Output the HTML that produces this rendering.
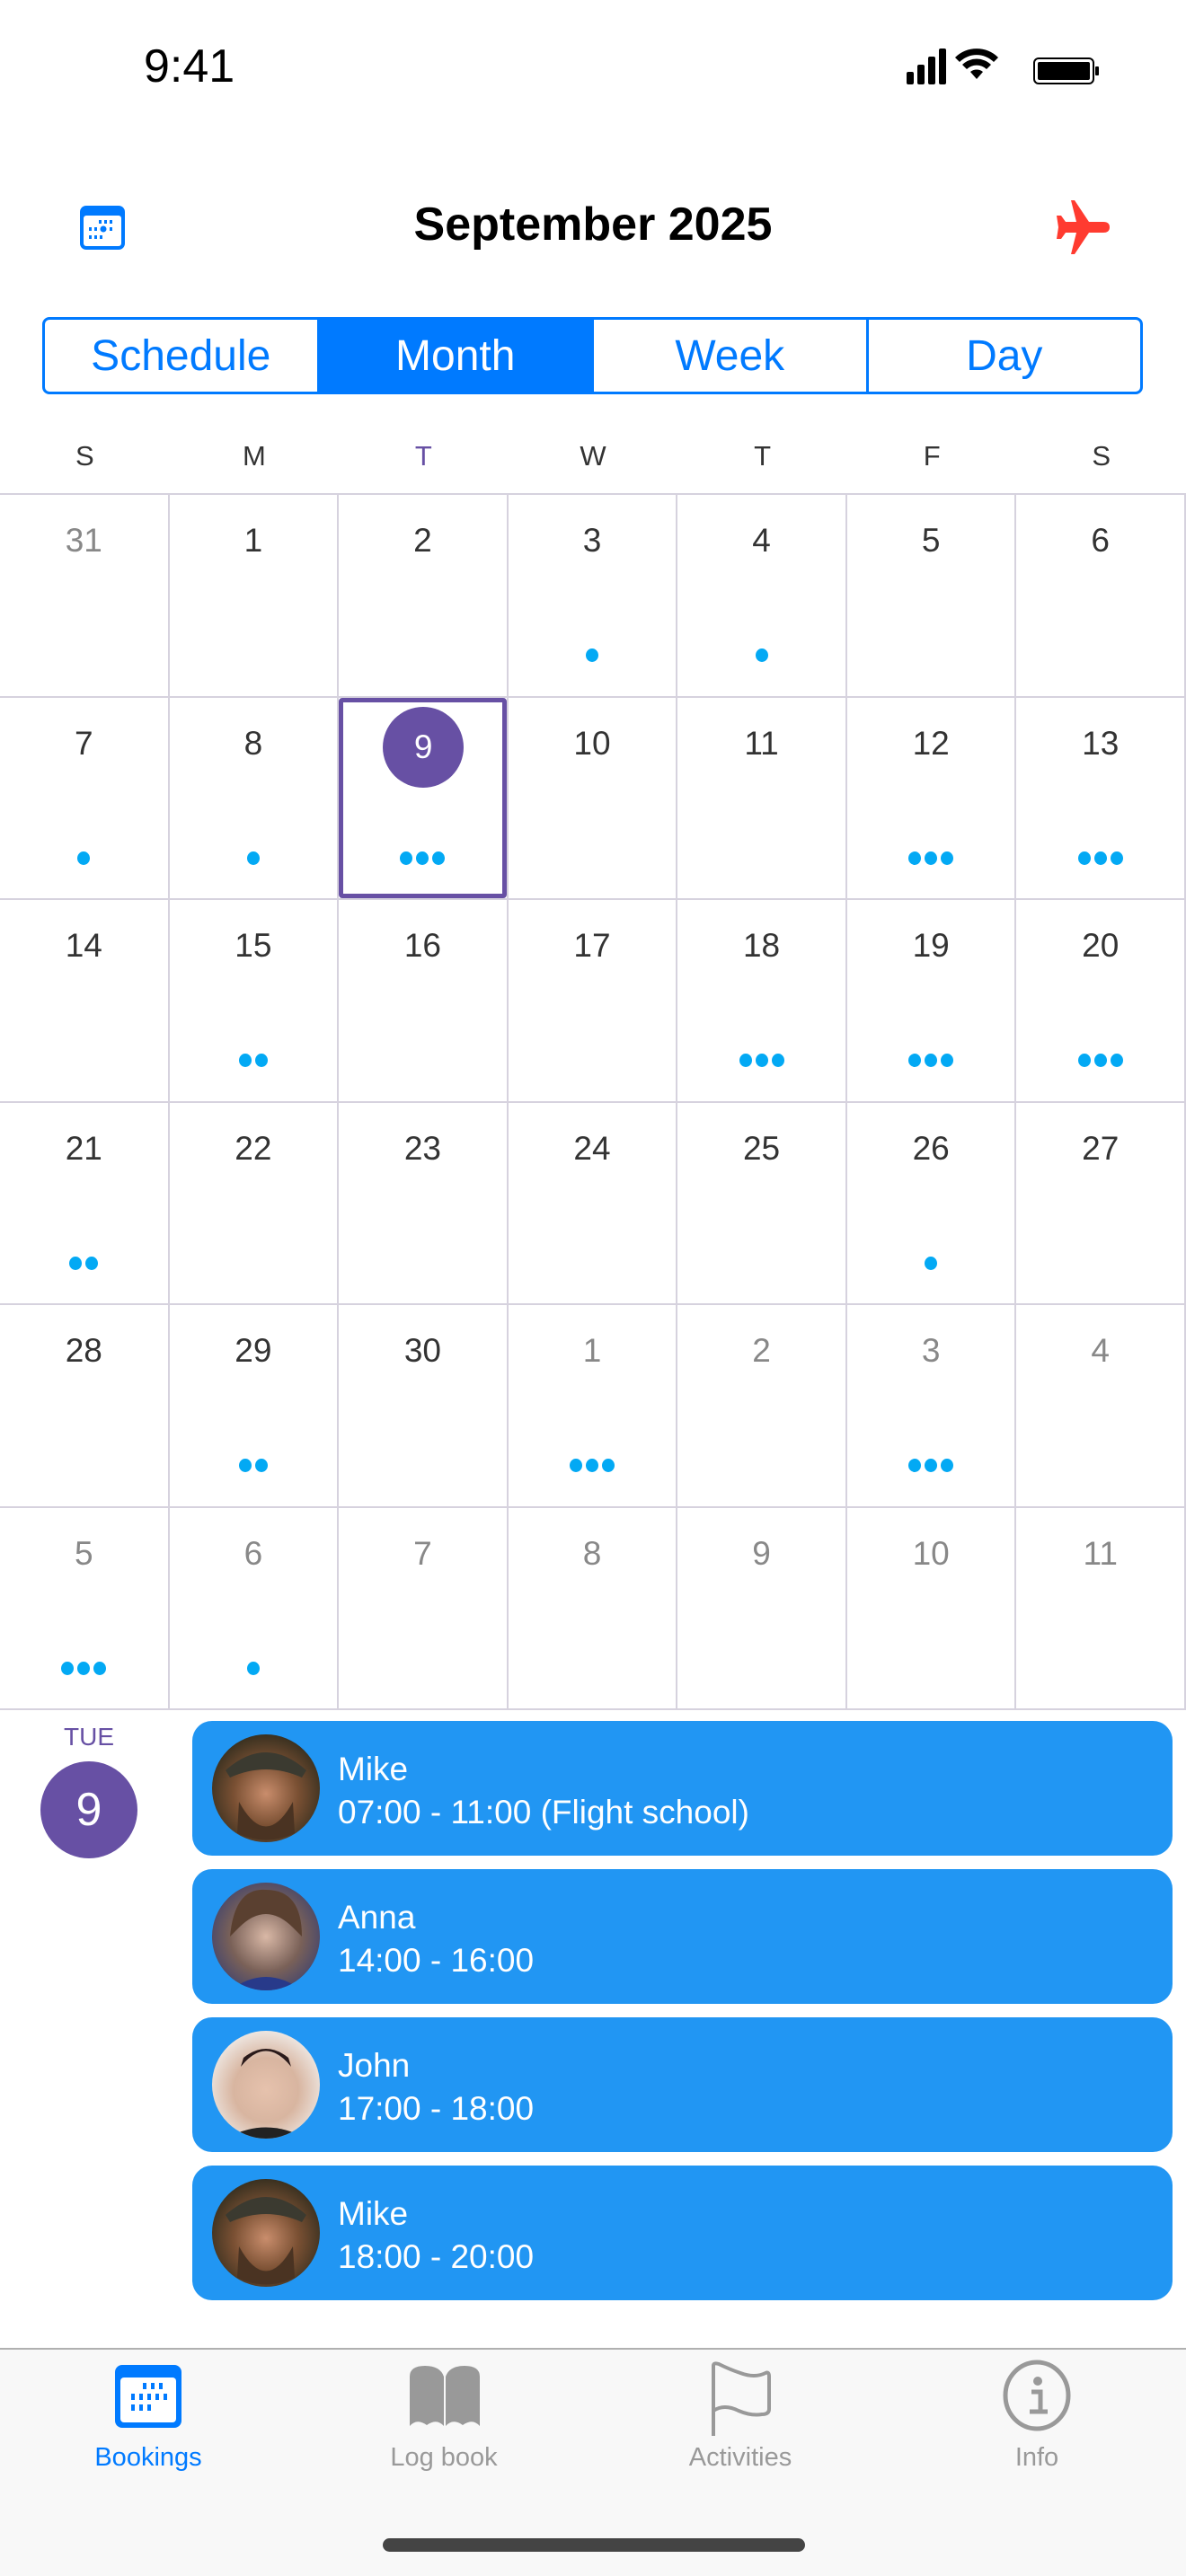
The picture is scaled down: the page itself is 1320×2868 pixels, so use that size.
<!DOCTYPE html>
<html><head><meta charset="utf-8"><style>
*{margin:0;padding:0;box-sizing:border-box}
body{width:1320px;height:2868px;background:#fff;font-family:"Liberation Sans",sans-serif;position:relative;overflow:hidden;color:#222}
.abs{position:absolute}
.seg{position:absolute;left:47px;top:353px;width:1225px;height:86px;border:3px solid #007aff;border-radius:8px;display:flex;overflow:hidden}
.seg div{flex:1;display:flex;align-items:center;justify-content:center;font-size:48px;color:#007aff;border-right:3px solid #007aff}
.seg div:last-child{border-right:none}
.seg .on{background:#007aff;color:#fff}
.wd{position:absolute;top:490px;width:188.6px;text-align:center;font-size:31px;color:#333}
.grid{position:absolute;left:0;top:549px;width:1320px;height:1352px;border-top:2px solid #d6d2de}
.cell{position:absolute;width:188.6px;height:225.5px;border-right:2px solid #d6d2de;border-bottom:2px solid #d6d2de}
.num{position:absolute;top:30px;width:100%;text-align:center;font-size:37px;color:#333}
.gray .num{color:#888}
.dots{position:absolute;top:171px;width:100%;display:flex;justify-content:center;gap:4px}
.dots i{width:14px;height:15px;border-radius:50%;background:#03a9f4;display:block}
.card{position:absolute;left:214px;width:1091px;height:150px;background:#2196f3;border-radius:22px;color:#fff}
.card .av{position:absolute;left:22px;top:15px;width:120px;height:120px;border-radius:50%;overflow:hidden}
.card .t{position:absolute;left:162px;top:30px;font-size:37px;line-height:48px}
.tab{position:absolute;top:2720px;width:330px;text-align:center;font-size:29px;color:#999}
</style></head><body>
<div class="abs" style="left:160px;top:44px;font-size:52px;color:#000">9:41</div>
<svg class="abs" style="left:1005px;top:52px" width="220" height="44" viewBox="0 0 220 44">
<rect x="4" y="28" width="8" height="14" rx="2"/><rect x="16" y="20" width="8" height="22" rx="2"/><rect x="28" y="11" width="8" height="31" rx="2"/><rect x="40" y="2" width="8" height="40" rx="2"/>
<path d="M82 36 l-7-8 a11 11 0 0 1 14 0z M66 20 a23 23 0 0 1 32 0 l-5 5 a16 16 0 0 0 -22 0z M58 12 a34 34 0 0 1 48 0 l-5 5 a27 27 0 0 0 -38 0z"/>
<rect x="146" y="13" width="66" height="28" rx="5" fill="none" stroke="#000" stroke-width="2"/><rect x="150" y="17" width="58" height="20" rx="2"/><rect x="214" y="22" width="4" height="10" rx="1"/>
</svg>
<svg class="abs" style="left:88px;top:228px" width="52" height="51" viewBox="0 0 52 51"><rect x="1" y="1" width="50" height="49" rx="7" fill="#007aff"/><rect x="5" y="12" width="42" height="34" rx="3" fill="#fff"/>
<g fill="#007aff"><rect x="22" y="17" width="3" height="4"/><rect x="28" y="17" width="3" height="4"/><rect x="34" y="17" width="3" height="4"/><rect x="11" y="25" width="3" height="4"/><rect x="17" y="25" width="3" height="4"/><circle cx="27" cy="27" r="3.5"/><rect x="34" y="25" width="3" height="4"/><rect x="11" y="34" width="3" height="4"/><rect x="17" y="34" width="3" height="4"/><rect x="23" y="34" width="3" height="4"/></g></svg>
<div class="abs" style="left:0;width:1320px;top:220px;text-align:center;font-size:52px;font-weight:bold;color:#000">September 2025</div>
<svg class="abs" style="left:1174px;top:222px" width="62" height="62" viewBox="0 0 62 62"><path fill="#ff3b30" d="M18 1 L22 1 L38 25 L54 25 Q61 25 61 31 Q61 37 54 37 L38 37 L22 61 L18 61 L24 37 L12 37 L7 44 L2 44 L4 31 L2 18 L7 18 L12 25 L24 25 Z"/></svg>
<div class="seg"><div>Schedule</div><div class="on">Month</div><div>Week</div><div>Day</div></div>
<div class="wd" style="left:0">S</div><div class="wd" style="left:188.6px">M</div><div class="wd" style="left:377.1px;color:#6750a4">T</div><div class="wd" style="left:565.7px">W</div><div class="wd" style="left:754.3px">T</div><div class="wd" style="left:942.9px">F</div><div class="wd" style="left:1131.4px">S</div>
<div class="grid" id="g"></div>
<script>
var d=[["31",0,1],["1",0],["2",0],["3",1],["4",1],["5",0],["6",0],
["7",1],["8",1],["9",3],["10",0],["11",0],["12",3],["13",3],
["14",0],["15",2],["16",0],["17",0],["18",3],["19",3],["20",3],
["21",2],["22",0],["23",0],["24",0],["25",0],["26",1],["27",0],
["28",0],["29",2],["30",0],["1",3,1],["2",0,1],["3",3,1],["4",0,1],
["5",3,1],["6",1,1],["7",0,1],["8",0,1],["9",0,1],["10",0,1],["11",0,1]];
var h="";d.forEach(function(c,i){var r=Math.floor(i/7),k=i%7;var dots="";for(var j=0;j<c[1];j++)dots+="<i></i>";
var num=(i==9)?'<div style="position:absolute;left:49px;top:10px;width:90px;height:90px;border-radius:50%;background:#6750a4;color:#fff;font-size:37px;display:flex;align-items:center;justify-content:center">9</div>':'<div class="num">'+c[0]+'</div>';
var sel=(i==9)?'<div style="position:absolute;left:0;top:0;right:0;bottom:0;border:5px solid #6750a4;border-radius:4px"></div>':'';
h+='<div class="cell'+(c[2]?' gray':'')+'" style="left:'+(k*188.57)+'px;top:'+(r*225.5)+'px">'+sel+num+'<div class="dots">'+dots+'</div></div>';});
document.getElementById("g").innerHTML=h;
</script>
<div class="abs" style="left:49px;width:100px;top:1918px;text-align:center;font-size:28px;color:#6750a4">TUE</div>
<div class="abs" style="left:45px;top:1961px;width:108px;height:108px;border-radius:50%;background:#6750a4;color:#fff;font-size:52px;display:flex;align-items:center;justify-content:center">9</div>
<svg width="0" height="0" style="position:absolute"><defs>
<radialGradient id="m" cx=".5" cy=".55" r=".6"><stop offset="0" stop-color="#c98d6c"/><stop offset=".5" stop-color="#7a5033"/><stop offset="1" stop-color="#2c2a1c"/></radialGradient>
<radialGradient id="a" cx=".5" cy=".5" r=".6"><stop offset="0" stop-color="#d9b8a6"/><stop offset=".55" stop-color="#7a6158"/><stop offset="1" stop-color="#3a4070"/></radialGradient>
<radialGradient id="j" cx=".5" cy=".55" r=".6"><stop offset="0" stop-color="#e6c2ad"/><stop offset=".5" stop-color="#d8b5a0"/><stop offset="1" stop-color="#f2f0ee"/></radialGradient></defs></svg>
<div class="card" style="top:1916px"><svg class="av" viewBox="0 0 120 120"><rect width="120" height="120" fill="url(#m)"/><path d="M15 40 Q60 0 105 40 L100 48 Q60 30 20 48Z" fill="#3b3a30"/><path d="M30 75 Q60 130 90 75 L92 110 Q60 125 28 110Z" fill="#4a3322"/></svg><div class="t">Mike<br>07:00 - 11:00 (Flight school)</div></div>
<div class="card" style="top:2081px"><svg class="av" viewBox="0 0 120 120"><rect width="120" height="120" fill="url(#a)"/><path d="M20 60 Q25 5 60 8 Q100 8 100 60 L90 50 Q60 20 30 50Z" fill="#5a4030"/><path d="M20 120 Q60 90 100 120Z" fill="#283a8a"/></svg><div class="t">Anna<br>14:00 - 16:00</div></div>
<div class="card" style="top:2246px"><svg class="av" viewBox="0 0 120 120"><rect width="120" height="120" fill="url(#j)"/><path d="M32 40 Q60 5 88 40 L85 30 Q60 10 35 30Z" fill="#2a1a1a"/><path d="M15 120 Q60 95 105 120Z" fill="#222"/></svg><div class="t">John<br>17:00 - 18:00</div></div>
<div class="card" style="top:2411px"><svg class="av" viewBox="0 0 120 120"><rect width="120" height="120" fill="url(#m)"/><path d="M15 40 Q60 0 105 40 L100 48 Q60 30 20 48Z" fill="#3b3a30"/><path d="M30 75 Q60 130 90 75 L92 110 Q60 125 28 110Z" fill="#4a3322"/></svg><div class="t">Mike<br>18:00 - 20:00</div></div>
<div class="abs" style="left:0;top:2614px;width:1320px;height:254px;background:#f8f8f8;border-top:2px solid #b0b0b0"></div>
<svg class="abs" style="left:128px;top:2633px" width="74" height="70" viewBox="0 0 74 70"><rect x="0" y="0" width="74" height="70" rx="8" fill="#007aff"/><rect x="6" y="14" width="62" height="50" rx="4" fill="#fff"/><g fill="#007aff"><rect x="31" y="20" width="4" height="7"/><rect x="40" y="20" width="4" height="7"/><rect x="49" y="20" width="4" height="7"/><rect x="18" y="32" width="4" height="7"/><rect x="27" y="32" width="4" height="7"/><rect x="36" y="32" width="4" height="7"/><rect x="45" y="32" width="4" height="7"/><rect x="54" y="32" width="4" height="7"/><rect x="18" y="44" width="4" height="7"/><rect x="27" y="44" width="4" height="7"/><rect x="36" y="44" width="4" height="7"/></g></svg>
<svg class="abs" style="left:456px;top:2634px" width="78" height="68" viewBox="0 0 78 68"><path fill="#999" d="M0 12 Q0 0 17 0 Q34 0 38 12 L38 67 Q30 58 19 66 Q8 58 0 67Z M40 12 Q44 0 61 0 Q78 0 78 12 L78 67 Q70 58 59 66 Q48 58 40 67Z"/></svg>
<svg class="abs" style="left:790px;top:2628px" width="70" height="86" viewBox="0 0 70 86"><path d="M4 84 L4 6 Q4 2 10 4 Q22 10 34 14 Q50 20 62 14 Q66 12 66 18 L66 54 Q66 60 58 60 Q46 62 32 56 Q16 48 4 56" fill="none" stroke="#999" stroke-width="4"/></svg>
<svg class="abs" style="left:1116px;top:2627px" width="76" height="80" viewBox="0 0 76 80"><ellipse cx="38" cy="40" rx="35" ry="37" fill="none" stroke="#999" stroke-width="5"/><circle cx="39" cy="24" r="5" fill="#999"/><path d="M32 36 L42 36 L42 58 M30 58 L50 58" fill="none" stroke="#999" stroke-width="5"/></svg>
<div class="tab" style="left:0;color:#007aff">Bookings</div>
<div class="tab" style="left:329px">Log book</div>
<div class="tab" style="left:659px">Activities</div>
<div class="tab" style="left:989px">Info</div>
<div class="abs" style="left:426px;top:2826px;width:470px;height:15px;border-radius:8px;background:#444"></div>
</body></html>
